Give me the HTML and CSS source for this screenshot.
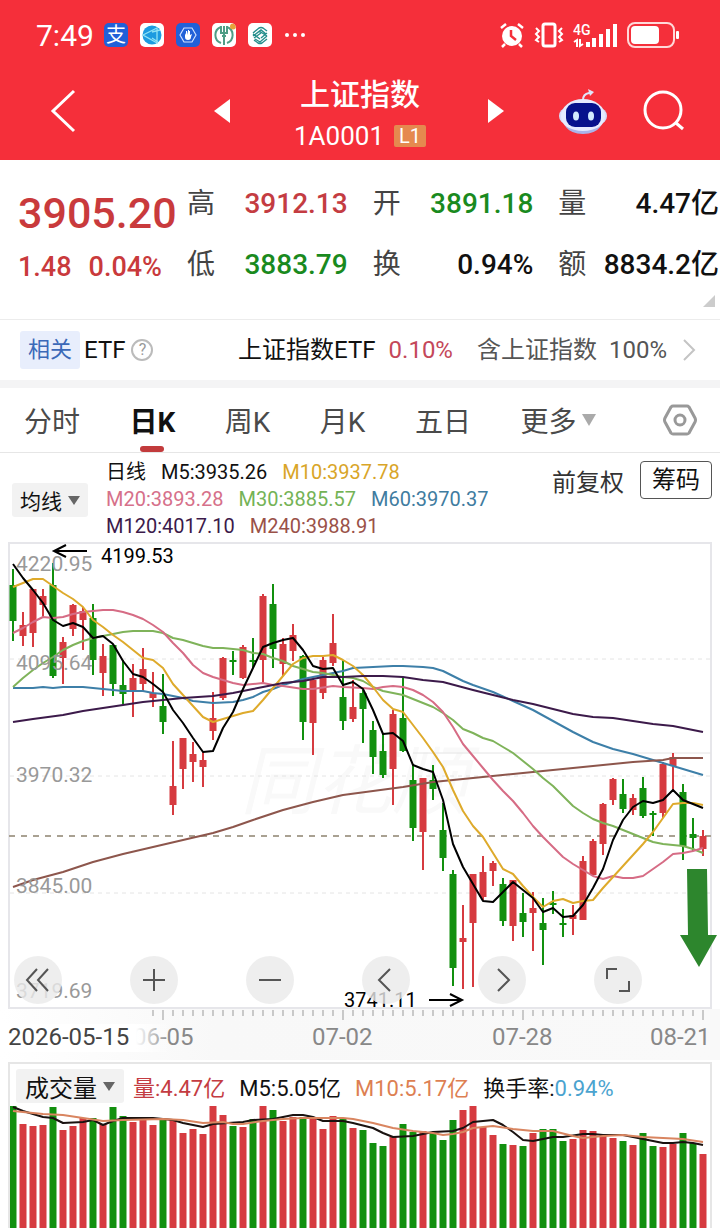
FILE: index.html
```html
<!DOCTYPE html>
<html lang="zh-CN">
<head>
	<title>上证指数</title>
	<meta charset="utf-8">
	<meta name="viewport" content="width=device-width">
	<link rel="stylesheet" href="styles.css">
</head>
<body>
	<header class="top">
		<div class="status">
			<span class="time">7:49</span>
			<div class="apps">
				<span class="app blue">支</span>
				<svg class="app" viewBox="0 0 24 24"><circle cx="12" cy="12" r="9.500" fill="#1c9be0"/><path d="M3 12L17 5V20ZM12 9L20 7M12 15L18 19" fill="none" stroke="#8fe3f5" stroke-width="1.300"/></svg>
				<svg class="app blue" viewBox="0 0 24 24"><path d="M8 5h8l4 7-4 7H8l-4-7z" fill="none" stroke="#cfe0ff" stroke-width="1.200"/><path d="M9 10v4q0 3 3 3t3-3l1-3-2 1V8h-1v4-5h-1v5l-1-4h-1v4z" fill="#fff"/></svg>
				<svg class="app" viewBox="0 0 24 24"><path d="M9 4a8.500 8.500 0 0 0 0 16M15 4a8.500 8.500 0 0 1 0 16" fill="none" stroke="#4f9d86" stroke-width="2"/><path d="M12 10v12M9 3v7h6V3M12 3v7M10 13h4" fill="none" stroke="#4f9d86" stroke-width="2"/><circle cx="21" cy="3.500" r="3" fill="#e8a23a"/></svg>
				<svg class="app" viewBox="0 0 24 24"><path d="M5 10l6-5q2-1 4 0l4 3M5 13l8-6 5 4M6 15l7-5M19 10l-6 5M19 13l-7 6-5-3M19 16l-5 4q-2 1-4 0l-4-3M5 11l7 5M11 8l8 5" fill="none" stroke="#258f8c" stroke-width="1.400"/></svg>
			</div>
			<span class="dots"><i></i><i></i><i></i></span>
			<div class="signals">
				<svg width="26" height="26" viewBox="0 0 26 26"><circle cx="13" cy="14" r="10" fill="#fff"/><path d="M2 6l5-4M24 6l-5-4M6 22l-3 3M20 22l3 3" stroke="#fff" stroke-width="2.500"/><path d="M12 8v6l5 4" fill="none" stroke="#f52f3a" stroke-width="2.500"/></svg>
				<svg width="30" height="26" viewBox="0 0 30 26"><rect x="9" y="2" width="12" height="22" rx="2" fill="none" stroke="#fff" stroke-width="3"/><path d="M2 6l3 3-3 3 3 3-3 3 3 2M28 6l-3 3 3 3-3 3 3 3-3 2" fill="none" stroke="#fff" stroke-width="2"/></svg>
				<svg width="44" height="26" viewBox="0 0 44 26"><text x="0" y="13" font-size="14" font-weight="500" fill="#fff">4G</text><path d="M1 20l3-2v7M7 17v7l3-2" stroke="#fff" fill="none" stroke-width="2"/><path d="M15 25v-5M21 25v-9M28 25V12M35 25V7M42 25V2" stroke="#fff" stroke-width="4"/></svg>
				<svg width="54" height="28" viewBox="0 0 54 28"><rect x="2" y="2" width="46" height="24" rx="7" fill="none" stroke="#ffd9d9" stroke-width="2"/><rect x="5" y="5" width="28" height="18" rx="4" fill="#fff"/><rect x="50" y="10" width="3" height="8" rx="1" fill="#fff"/></svg>
			</div>
		</div>
		<nav class="nav">
			<div class="nav-left">
				<button aria-label="返回"><svg width="26" height="44" viewBox="0 0 26 44"><path d="M24 2L3 22l21 20" fill="none" stroke="#fff" stroke-width="3"/></svg></button>
				<button aria-label="上一个"><svg width="16" height="24" viewBox="0 0 16 24"><path d="M16 0v24L0 12z" fill="#fff"/></svg></button>
			</div>
			<div class="title">
				<h1>上证指数</h1>
				<div class="code">1A0001<span>L1</span></div>
			</div>
			<div class="nav-right">
				<button aria-label="下一个"><svg width="16" height="24" viewBox="0 0 16 24"><path d="M0 0v24l16-12z" fill="#fff"/></svg></button>
				<button class="robot" aria-label="助手"><svg width="50" height="46" viewBox="0 0 50 46"><path d="M25 12q0-6 6-7h2" fill="none" stroke="#dfe5fa" stroke-width="2"/><path d="M30 1l6 3-4 4z" fill="#dfe5fa"/><rect x="1" y="20" width="48" height="16" rx="8" fill="#d8dcf8"/><ellipse cx="25" cy="28" rx="22" ry="17" fill="#e6ebff"/><path d="M7 38q18 10 36 0-6 8-18 8T7 38" fill="#a9b4ea"/><rect x="8" y="15" width="35" height="24" rx="9" fill="#07128c"/><ellipse cx="18" cy="28" rx="3" ry="4.500" fill="#d3ecff"/><ellipse cx="33" cy="28" rx="3" ry="4.500" fill="#d3ecff"/></svg></button>
				<button aria-label="搜索"><svg width="42" height="42" viewBox="0 0 42 42"><circle cx="20" cy="20" r="18" fill="none" stroke="#fff" stroke-width="3"/><path d="M33 33l7 6" stroke="#fff" stroke-width="3"/></svg></button>
			</div>
		</nav>
	</header>

	<section class="quote">
		<div class="price">
			<strong>3905.20</strong>
			<p><span>1.48</span><span>0.04%</span></p>
		</div>
		<dl>
			<div><dt>高</dt><dd class="up">3912.13</dd></div>
			<div><dt>开</dt><dd class="down">3891.18</dd></div>
			<div><dt>量</dt><dd>4.47亿</dd></div>
			<div><dt>低</dt><dd class="down">3883.79</dd></div>
			<div><dt>换</dt><dd>0.94%</dd></div>
			<div><dt>额</dt><dd>8834.2亿</dd></div>
		</dl>
		<i class="corner"></i>
	</section>

	<a class="related" href="#">
		<span class="tag">相关</span>
		<span class="etf">ETF</span>
		<span class="help">?</span>
		<span class="name">上证指数ETF</span>
		<span class="rate">0.10%</span>
		<span class="part">含上证指数</span>
		<span class="full">100%</span>
		<svg width="14" height="22" viewBox="0 0 14 22"><path d="M2 1l10 10L2 21" fill="none" stroke="#c4c4c4" stroke-width="2"/></svg>
	</a>

	<nav class="tabs">
		<button>分时</button>
		<button class="on">日K</button>
		<button>周K</button>
		<button>月K</button>
		<button>五日</button>
		<button>更多<i class="tri"></i></button>
		<button class="gear" aria-label="设置"><svg width="34" height="32" viewBox="0 0 34 32"><path d="M10 2h14q1 0 2 1l6 11q1 2 0 4l-6 11q-1 1-2 1H10q-1 0-2-1L2 18q-1-2 0-4L8 3q1-1 2-1z" fill="none" stroke="#999" stroke-width="3"/><circle cx="17" cy="16" r="5" fill="none" stroke="#999" stroke-width="3"/></svg></button>
	</nav>

	<section class="legend">
		<button class="pick">均线<i class="tri"></i></button>
		<div class="averages">
			<p><span>日线</span><span>M5:3935.26</span><span class="m10">M10:3937.78</span></p>
			<p><span class="m20">M20:3893.28</span><span class="m30">M30:3885.57</span><span class="m60">M60:3970.37</span></p>
			<p><span class="m120">M120:4017.10</span><span class="m240">M240:3988.91</span></p>
		</div>
		<button class="adjust">前复权</button>
		<button class="chips">筹码</button>
	</section>

	<section class="chart">
		<svg id="kline" viewBox="0 0 720 520">
			<defs>
				<linearGradient id="fade" x1="0" x2="1" y1="0" y2="0">
					<stop offset="0" stop-color="#fff"/>
					<stop offset="0.300" stop-color="#f8f8f8"/>
					<stop offset="1" stop-color="#f9f9f9"/>
				</linearGradient>
				<linearGradient id="cover" x1="0" x2="1" y1="0" y2="0">
					<stop offset="0.800" stop-color="#fff"/>
					<stop offset="1" stop-color="#fff" stop-opacity="0"/>
				</linearGradient>
			</defs>
			<rect x="0" y="469" width="720" height="51" fill="url(#fade)"/>
			<text class="mark" x="240" y="268">同花顺</text>
			<path class="frame" d="M9 468V3H711V468Z"/>
			<path class="grid" d="M10 119H711M10 236H711M10 353H711"/>
			<path class="gap-line" d="M413 213H711"/>
			<path class="now" d="M9 296H711"/>
			<g id="candles"></g>
			<g id="lines"></g>
			<g class="scale">
				<text x="16" y="31">4220.95</text>
				<text x="16" y="130">4095.64</text>
				<text x="16" y="242">3970.32</text>
				<text x="16" y="353">3845.00</text>
				<text x="16" y="458">3719.69</text>
			</g>
			<g class="note">
				<path d="M87 11H54M66 5L54 11l12 6M429 460h33M450 454l12 6-12 6"/>
				<text x="101" y="23">4199.53</text>
				<text x="344" y="467">3741.11</text>
			</g>
			<polygon fill="#2d862d" points="687,329 707,329 708,395 717,395 699,427 680,395 688,395"/>
			<path id="ticks"/>
			<g class="dates">
				<text x="133" y="505">06-05</text>
				<text x="312" y="505">07-02</text>
				<text x="492" y="505">07-28</text>
				<text x="650" y="505">08-21</text>
				<rect x="0" y="484" width="170" height="28" fill="url(#cover)"/>
				<text class="first" x="8" y="505">2026-05-15</text>
			</g>
		</svg>
		<div class="tools">
			<button aria-label="最早"><svg viewBox="0 0 48 48"><path d="M23 13L13 24l10 11M34 13L24 24l10 11"/></svg></button>
			<button aria-label="放大"><svg viewBox="0 0 48 48"><path d="M13 24h22M24 13v22"/></svg></button>
			<button aria-label="缩小"><svg viewBox="0 0 48 48"><path d="M13 24h22"/></svg></button>
			<button aria-label="左移"><svg viewBox="0 0 48 48"><path d="M28 13L17 24l11 11"/></svg></button>
			<button aria-label="右移"><svg viewBox="0 0 48 48"><path d="M20 13l11 11-11 11"/></svg></button>
			<button aria-label="全屏"><svg viewBox="0 0 48 48"><path d="M13 23V13h10M35 25v10H25"/></svg></button>
		</div>
	</section>

	<section class="volume">
		<div class="volume-legend">
			<button class="pick">成交量<i class="tri"></i></button>
			<span class="up">量:4.47亿</span>
			<span>M5:5.05亿</span>
			<span class="vm10">M10:5.17亿</span>
			<span>换手率:<b>0.94%</b></span>
		</div>
		<svg id="vol" viewBox="10 0 700 124"></svg>
	</section>

	<script type="text/javascript">
		// up(1) / down(0), high, low, body top, body bottom
		var candles = [
			[0,29,101,45,81],[1,72,106,85,96],[1,49,107,49,93],[1,49,77,56,65],[0,23,138,45,136],
			[1,97,144,102,118],[1,64,96,65,89],[1,67,110,71,80],[0,64,135,78,120],[1,104,156,116,133],
			[0,104,156,105,144],[0,120,164,145,154],[1,124,177,138,150],[1,108,151,129,144],[1,132,167,153,158],
			[0,134,194,166,182],[1,201,275,246,265],[1,198,249,198,229],[1,202,242,214,222],[1,212,247,220,227],
			[1,152,200,178,191],[1,117,160,118,158],[0,111,135,120,122],[1,105,139,107,138],[0,98,128,120,122],
			[1,54,143,56,120],[0,44,128,64,109],[1,98,136,104,124],[1,84,121,95,111],[0,115,200,116,182],
			[1,139,215,140,183],[1,117,159,120,153],[1,74,126,103,123],[0,120,190,157,181],[1,140,182,167,179],
			[0,150,203,153,169],[0,181,234,190,217],[0,194,238,211,235],[1,170,265,174,229],[0,138,212,178,211],
			[0,224,301,240,288],[1,238,330,238,292],[0,225,260,240,249],[0,263,331,290,318],[0,330,446,334,428],
			[1,365,449,398,402],[1,334,447,334,383],[1,316,361,332,357],[1,321,346,323,331],[0,338,386,344,381],
			[1,340,401,340,386],[0,353,397,373,382],[1,352,411,368,373],[0,358,425,383,390],[0,351,374,363,365],
			[0,369,397,383,385],[1,365,395,375,379],[1,316,380,321,380],[1,299,335,301,335],[1,263,315,264,304],
			[1,238,265,239,260],[0,239,273,254,269],[1,254,275,258,270],[0,237,278,248,276],[0,271,296,273,275],
			[1,222,278,224,273],[1,213,250,217,226],[0,244,320,252,306],[0,278,311,294,298],[1,290,316,296,309]
		];
		var lines = {
			'#3d7fa8': '13,148 33,148 43,147 53,148 63,147 83,147 103,149 123,151 143,151 153,153 163,154 173,156 183,158 193,161 213,163 233,162 243,160 253,157 263,152 273,149 283,145 293,142 303,139 323,135 343,131 353,128 373,127 393,126 403,126 423,127 433,128 443,131 453,136 463,141 473,145 493,152 513,161 533,170 553,181 573,192 593,202 613,209 633,214 653,220 673,226 693,232 703,235',
			'#8d564c': '13,347 33,340 63,332 93,322 123,314 153,307 183,300 213,293 233,287 253,280 283,270 313,262 343,255 373,251 403,247 433,242 473,238 513,234 553,230 593,226 633,222 663,220 673,218 703,218',
			'#7fb35a': '13,147 23,138 33,130 43,123 53,117 63,110 73,105 83,101 93,98 103,96 113,94 123,92 133,91 143,91 153,91 163,93 173,98 183,100 193,103 203,106 213,108 223,108 233,109 243,110 253,113 263,114 273,118 283,121 293,126 303,129 313,132 323,133 333,135 343,137 353,138 363,141 373,147 383,151 393,153 403,155 413,159 423,163 433,167 443,173 453,180 463,189 473,193 483,198 493,201 503,207 513,213 523,221 533,229 543,238 553,246 563,256 573,266 583,273 593,279 603,283 613,286 623,290 633,294 643,298 653,302 663,304 673,305 683,306 693,309 703,313',
			'#d66c85': '13,93 23,88 33,82 43,77 53,78 63,77 73,74 83,72 93,71 103,70 113,70 123,72 133,75 143,79 153,85 163,92 173,103 183,113 193,125 203,133 213,137 223,140 233,143 243,145 253,144 263,143 273,145 283,146 303,149 313,149 333,146 343,147 363,148 373,149 383,147 393,146 403,147 413,150 423,155 433,162 443,172 453,187 463,204 473,216 483,228 493,240 503,251 513,261 523,273 533,286 543,297 553,307 563,317 573,324 583,330 593,336 603,339 613,336 623,338 633,338 643,336 653,329 663,322 673,314 683,313 693,311 703,308',
			'#deaa2b': '13,47 23,43 33,39 43,39 53,46 63,53 73,59 83,67 93,80 103,87 113,95 123,102 133,110 143,118 153,120 163,128 173,144 183,155 193,166 203,177 213,182 223,179 233,176 243,173 253,171 263,160 273,148 283,136 293,124 303,118 313,116 323,116 333,115 343,120 353,126 363,135 373,147 383,160 393,169 403,172 413,185 423,198 433,212 443,227 453,250 463,271 473,286 483,297 493,313 503,329 513,334 523,346 533,357 543,367 553,361 563,359 573,363 583,361 593,360 603,348 613,337 623,326 633,315 643,304 653,292 663,278 673,264 683,263 693,263 703,265',
			'#3c1a4a': '13,182 33,179 63,175 83,171 103,168 123,165 143,162 163,160 183,158 213,156 233,153 253,149 263,147 283,143 303,141 323,137 343,137 363,136 383,136 403,137 423,140 443,142 473,150 493,155 513,160 533,164 553,169 573,174 593,177 613,178 633,181 653,184 673,186 703,192',
			'#000': '13,24 23,38 33,50 43,63 53,80 63,86 73,83 83,87 93,98 103,96 113,104 123,121 133,134 143,137 153,144 163,152 173,170 183,183 193,198 203,212 213,211 223,188 233,172 243,149 253,128 263,107 273,103 283,100 293,98 303,110 313,126 323,129 333,128 343,145 353,142 363,149 373,170 383,194 393,193 403,201 413,225 423,229 433,232 443,260 453,304 463,327 473,344 483,361 493,362 503,352 513,342 523,350 533,358 543,372 553,368 563,377 573,376 583,365 593,348 603,329 613,300 623,280 633,267 643,261 653,263 663,260 673,250 683,260 693,264 703,268'
		};
		// bar tops in the volume panel
		var volumes = [2,20,22,21,3,26,22,14,14,20,3,12,18,16,21,16,15,29,25,30,2,11,22,23,15,2,6,17,13,13,14,25,12,14,24,26,39,42,33,20,28,27,29,36,16,6,2,23,31,40,41,42,29,25,25,37,35,26,27,31,34,37,41,29,42,43,40,29,39,50];
		var volumeLines = {
			'#1a1210': '13,3 23,7 43,13 53,14 63,19 83,18 93,16 103,21 113,17 123,14 153,14 173,16 183,19 203,23 213,20 243,18 253,16 273,15 283,13 293,11 303,11 313,13 323,17 343,17 353,19 373,24 383,29 393,33 413,32 433,28 453,27 463,24 473,18 483,17 493,16 503,21 513,28 523,36 533,37 543,35 553,33 563,33 583,30 593,30 603,31 623,31 633,33 643,35 653,37 663,39 673,39 683,38 693,39 703,41',
			'#d98560': '13,7 43,10 63,11 83,14 103,17 123,16 163,15 183,16 203,19 223,18 233,20 243,20 263,17 283,15 303,14 323,14 343,14 353,15 373,19 393,24 413,27 433,29 443,31 453,30 463,28 473,24 493,22 513,25 533,27 553,27 573,32 583,34 603,32 623,31 643,33 663,34 683,35 703,38'
		};

		function rect(x, y, w, h, up){
			return '<rect x="'+x+'" y="'+y+'" width="'+w+'" height="'+h+'" class="'+(up ? 'red' : 'green')+'"/>';
		}
		function draw(list){
			var s = '';
			for(var color in list){
				s += '<polyline class="line" stroke="'+color+'" points="'+list[color]+'"/>';
			}
			return s;
		}

		var bodies = '';
		var bars = '';
		var ticks = '';
		for(var i=0;i<candles.length;i++){
			var c = candles[i];
			var x = 13+i*10;
			bodies += rect(x-1, c[1], 2, c[2]-c[1], c[0]);
			bodies += rect(x-3.5, c[3], 7, c[4]-c[3], c[0]);
			bars += rect(x-3.5, volumes[i], 7, 124-volumes[i], c[0]);
			if(i>13){
				ticks += 'M'+x+' 470v'+(i%18==15 ? 10 : 6);
			}
		}
		document.querySelector('#candles').innerHTML = bodies;
		document.querySelector('#lines').innerHTML = draw(lines);
		document.querySelector('#ticks').setAttribute('d', ticks);
		document.querySelector('#vol').innerHTML = bars+draw(volumeLines);
	</script>
</body>
</html>
```

FILE: styles.css
```css
*{
	margin:0;
	padding:0;
	box-sizing: border-box;
}
body{
	background: #fff;
	color: #111;
	font-family: Roboto, "Noto Sans CJK SC", sans-serif;
}
button{
	border: 0;
	background: none;
	color: inherit;
	font: inherit;
	white-space: nowrap;
}
a{
	color: inherit;
	text-decoration: none;
}
svg{
	display: block;
	flex: none;
}
.up{
	color: #c43c42;
}
.down{
	color: #1a8a1e;
}

/* header */
.top{
	height: 160px;
	padding-top: 16px;
	background: #f52f3a;
	color: #fff;
}
.status{
	display: flex;
	align-items: center;
	height: 38px;
	padding: 0 40px 0 36px;
}
.time{
	width: 68px;
	font-size: 30px;
}
.apps{
	display: flex;
	gap: 12px;
}
.app{
	width: 24px;
	height: 24px;
	border-radius: 5px;
	background: #fff;
	font-size: 20px;
	line-height: 24px;
	text-align: center;
}
.app.blue{
	background: #2160d8;
}
.dots{
	display: flex;
	gap: 4px;
	margin-left: 13px;
}
.dots i{
	width: 4px;
	height: 4px;
	border-radius: 50%;
	background: #fff;
}
.signals{
	display: flex;
	align-items: center;
	gap: 9px;
	margin-left: auto;
}
.nav{
	display: grid;
	grid-template-columns: 1fr auto 1fr;
	padding-top: 20px;
}
.nav-left,.nav-right{
	display: flex;
	align-items: center;
	justify-content: space-between;
}
.nav-left{
	padding: 0 64px 8px 50px;
}
.nav-right{
	padding: 0 35px 8px 62px;
}
.robot{
	margin-left: 18px;
}
.title{
	text-align: center;
}
.title h1{
	font-size: 30px;
	font-weight: 500;
	line-height: 42px;
}
.code{
	display: flex;
	align-items: center;
	gap: 10px;
	font-size: 26px;
	line-height: 40px;
}
.code span{
	width: 32px;
	background: #e5894f;
	border-radius: 2px;
	font-size: 20px;
	line-height: 22px;
}

/* quote */
.quote{
	position: relative;
	display: grid;
	grid-template-columns: 169px 1fr;
	height: 160px;
	padding: 13px 1px 0 18px;
	border-bottom: 1px solid #ececec;
	font-size: 28px;
}
.price{
	color: #c93a3c;
}
.price strong{
	display: block;
	padding-top: 8px;
	font-size: 43px;
	font-weight: 500;
	line-height: 64px;
}
.price p{
	display: flex;
	gap: 17px;
	font-size: 27px;
	font-weight: 500;
	line-height: 44px;
}
.quote dl{
	display: grid;
	grid-template-columns: repeat(3, 1fr);
	grid-auto-rows: 61px;
	column-gap: 25px;
}
.quote dl div{
	display: flex;
	justify-content: space-between;
	line-height: 62px;
}
.quote dt{
	color: #444;
}
.quote dd{
	font-weight: 500;
}
.corner{
	position: absolute;
	right: 5px;
	bottom: 12px;
	border: 6px solid #ccc;
	border-top-color: transparent;
	border-left-color: transparent;
}

/* related etf */
.related{
	display: flex;
	align-items: center;
	height: 68px;
	padding: 0 24px 0 20px;
	border-bottom: 8px solid #f4f4f5;
	font-size: 24px;
	line-height: 32px;
	white-space: nowrap;
}
.tag{
	width: 60px;
	margin-right: 4px;
	border-radius: 3px;
	background: #e8eefc;
	color: #3b69b8;
	font-size: 22px;
	line-height: 38px;
	text-align: center;
}
.help{
	width: 22px;
	height: 22px;
	margin: 0 auto 0 6px;
	border: 2px solid #bbb;
	border-radius: 50%;
	color: #999;
	font-size: 16px;
	line-height: 18px;
	text-align: center;
}
.rate{
	margin: 0 24px 0 13px;
	color: #c4485a;
}
.part,.full{
	color: #555;
}
.full{
	margin: 0 15px 0 12px;
}

/* period tabs */
.tabs{
	display: flex;
	justify-content: space-between;
	height: 65px;
	padding: 0 23px 0 24px;
	border-bottom: 1px solid #e6e6e6;
	color: #4a4a4a;
	font-size: 28px;
}
.tabs button{
	display: flex;
	align-items: center;
}
.tabs .on{
	position: relative;
	color: #111;
	font-weight: 700;
}
.on:after{
	content: "";
	position: absolute;
	left: 50%;
	bottom: 0;
	width: 24px;
	height: 6px;
	margin-left: -12px;
	border-radius: 3px;
	background: #c23b3c;
}
.tri{
	display: inline-block;
	margin-left: 6px;
	border: 6px solid transparent;
	border-top: 9px solid #666;
	border-bottom: 0;
}
.tabs .tri{
	border-width: 12px 7px 0;
	border-top-color: #aaa;
}
.gear{
	margin-left: 17px;
}

/* averages */
.legend{
	display: flex;
	align-items: flex-start;
	height: 87px;
	padding: 6px 8px 0 12px;
	font-size: 24px;
}
.pick{
	display: flex;
	align-items: center;
	justify-content: center;
	height: 34px;
	border-radius: 3px;
	background: #f2f2f2;
}
.legend .pick{
	width: 76px;
	margin: 24px 18px 0 0;
	font-size: 21px;
}
.averages{
	font-size: 20px;
	line-height: 27px;
}
.averages p{
	display: flex;
	gap: 15px;
}
.m10{
	color: #d9a528;
}
.m20{
	color: #d6708a;
}
.m30{
	color: #74b356;
}
.m60{
	color: #3f7ca0;
}
.m120{
	color: #3c1a4a;
}
.m240{
	color: #9a5148;
}
.adjust{
	margin: 6px 16px 0 auto;
	color: #333;
	line-height: 36px;
}
.chips{
	width: 72px;
	height: 38px;
	margin-top: 2px;
	border: 1px solid #555;
	border-radius: 4px;
	line-height: 36px;
}

/* candles */
.chart{
	position: relative;
}
#kline{
	width: 100%;
}
.frame{
	fill: none;
	stroke: #e6e6ea;
	stroke-width: 2;
}
.mark{
	fill: #f9f9f9;
	font-size: 76px;
	font-style: italic;
}
.grid{
	stroke: #e4e4e4;
	stroke-width: 1;
	stroke-dasharray: 4 4;
}
.gap-line{
	stroke: #e4e4e4;
}
.now{
	stroke: #a9a192;
	stroke-width: 2;
	stroke-dasharray: 6 6;
}
.red{
	fill: #d63b40;
}
.green{
	fill: #12900f;
}
.line{
	fill: none;
	stroke-width: 2;
	stroke-linejoin: round;
}
.scale{
	fill: #999;
	font-size: 21px;
}
.note text{
	font-size: 20px;
}
.note path{
	fill: none;
	stroke: #000;
	stroke-width: 2;
}
#ticks{
	stroke: #999;
	stroke-width: 1;
}
.dates{
	fill: #888;
	font-size: 24px;
}
.dates .first{
	fill: #444;
}
.tools{
	position: absolute;
	left: 14px;
	right: 78px;
	bottom: 56px;
	display: flex;
	justify-content: space-between;
}
.tools button{
	width: 48px;
	height: 48px;
	border-radius: 50%;
	background: rgba(234,234,234,0.8);
}
.tools path{
	fill: none;
	stroke: #555;
	stroke-width: 2;
}

/* volume */
.volume{
	margin: 2px 8px 0;
	border: 2px solid #e6e6e6;
	border-bottom: 0;
}
.volume-legend{
	display: flex;
	align-items: center;
	gap: 14px;
	height: 40px;
	padding-left: 6px;
	padding-top: 4px;
	font-size: 22px;
	white-space: nowrap;
}
.volume-legend .pick{
	width: 108px;
	margin-right: -5px;
	font-size: 24px;
}
.vm10{
	color: #dd7f52;
}
.volume-legend b{
	color: #4ba3cf;
	font-weight: 400;
}
```
